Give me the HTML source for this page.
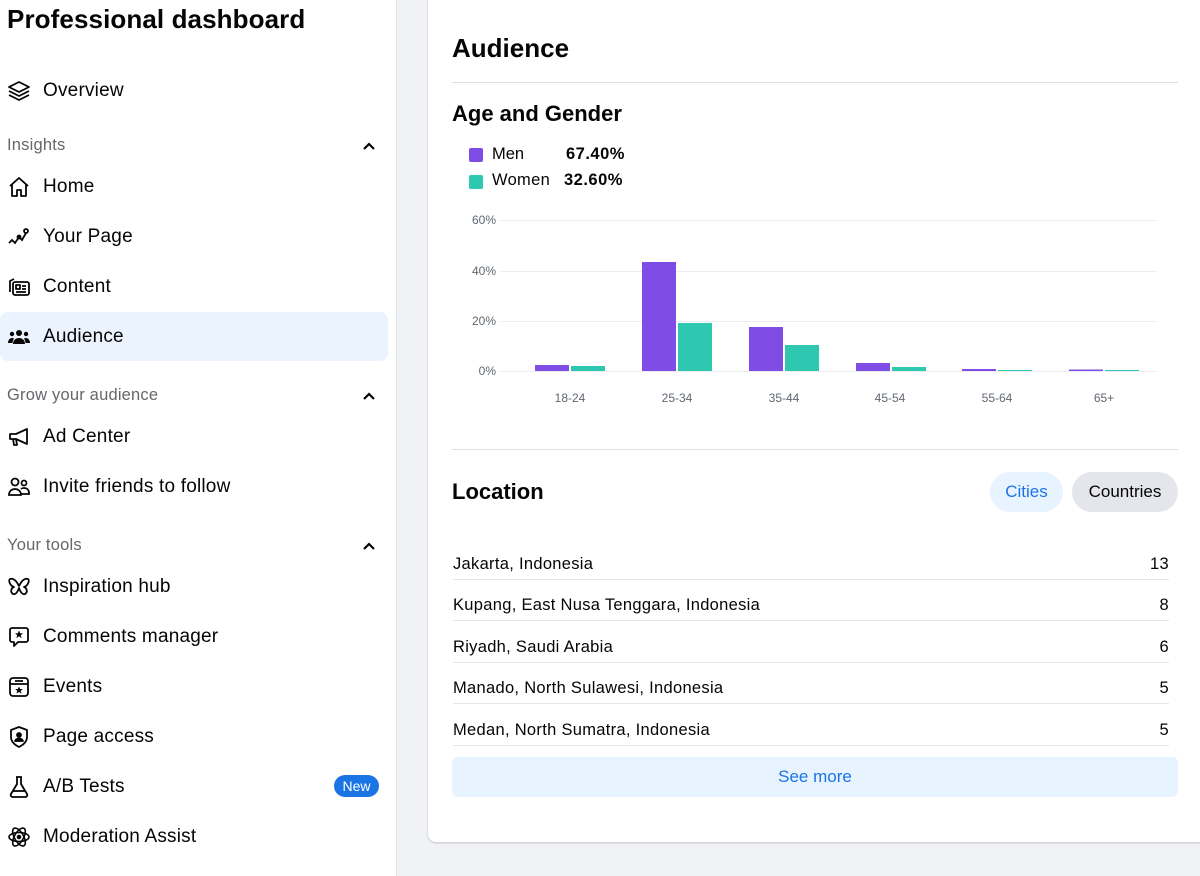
<!DOCTYPE html>
<html><head><meta charset="utf-8"><style>
*{margin:0;padding:0;box-sizing:border-box}
body{width:1200px;height:876px;overflow:hidden;background:#f0f2f5;font-family:"Liberation Sans",Arial,sans-serif;color:#050505;position:relative}
.side{position:absolute;left:0;top:0;width:397px;height:876px;background:#fff;border-right:1px solid #e4e6eb}
.a{position:absolute;white-space:nowrap}
.nav{font-size:19px;left:43px;letter-spacing:.2px}
.hdr{font-size:16.5px;color:#65676b;left:7px;letter-spacing:.2px}
.ic{position:absolute;left:7px;width:24px;height:24px}
.chev{position:absolute;left:362px;width:14px;height:10px}
.card{position:absolute;left:428px;top:-10px;width:780px;height:852px;background:#fff;border-radius:8px;box-shadow:0 1px 2px rgba(0,0,0,.2)}
.row{position:absolute;left:453px;width:716px;height:41px;border-bottom:1px solid #e4e6eb;font-size:16.5px;letter-spacing:.3px}
.row span{position:absolute;bottom:5px}
.row b{position:absolute;right:0;bottom:5px;font-weight:normal}
</style></head><body>
<div class="side">
<div class="a" style="left:7px;top:4px;font-size:26px;font-weight:bold;letter-spacing:.1px">Professional dashboard</div>

<svg class="ic" style="top:79px" viewBox="0 0 24 24" fill="none" stroke="#050505" stroke-width="1.8" stroke-linejoin="round"><path d="M12 3l10 5-10 5-10-5z"/><path d="M2 12l10 5 10-5"/><path d="M2 16l10 5 10-5"/></svg>
<div class="a nav" style="top:80px">Overview</div>

<div class="a hdr" style="top:136px">Insights</div>
<svg class="chev" style="top:141px" viewBox="0 0 14 10" fill="none" stroke="#050505" stroke-width="2.2"><path d="M2 8l5-5 5 5"/></svg>

<svg class="ic" style="top:175px" viewBox="0 0 24 24" fill="none" stroke="#050505" stroke-width="1.8" stroke-linejoin="round"><path d="M3 11L12 3l9 8M5 9v12h5v-6h4v6h5V9"/></svg>
<div class="a nav" style="top:176px">Home</div>

<svg class="ic" style="top:225px" viewBox="0 0 24 24" fill="none" stroke="#050505" stroke-width="1.8"><path d="M2 18l3-3 3 3 4-6 3 3 4-7"/><circle cx="19" cy="6" r="2"/><circle cx="12" cy="12" r="1.5"/></svg>
<div class="a nav" style="top:226px">Your Page</div>

<svg class="ic" style="top:275px" viewBox="0 0 24 24" fill="none" stroke="#050505" stroke-width="1.8" stroke-linejoin="round"><path d="M3 17V6l4-2"/><rect x="6" y="7" width="16" height="13" rx="2"/><rect x="9" y="10" width="4" height="4"/><path d="M15 11h4M15 14h4M9 17h10"/></svg>
<div class="a nav" style="top:276px">Content</div>

<div class="a" style="left:0;top:312px;width:388px;height:49px;background:#ebf3fe;border-radius:8px"></div>
<svg class="ic" style="top:325px" viewBox="0 0 24 24" fill="#050505"><circle cx="12" cy="8" r="3"/><circle cx="5" cy="9" r="2.2"/><circle cx="19" cy="9" r="2.2"/><path d="M6 19c0-4 3-6 6-6s6 2 6 6z"/><path d="M1 18c0-3 2-5 4-5 1 0 2 .5 2 .5C6 15 5.5 17 5.5 18z"/><path d="M23 18c0-3-2-5-4-5-1 0-2 .5-2 .5 1 1.5 1.5 3.5 1.5 4.5z"/></svg>
<div class="a nav" style="top:326px">Audience</div>

<div class="a hdr" style="top:386px">Grow your audience</div>
<svg class="chev" style="top:391px" viewBox="0 0 14 10" fill="none" stroke="#050505" stroke-width="2.2"><path d="M2 8l5-5 5 5"/></svg>

<svg class="ic" style="top:425px" viewBox="0 0 24 24" fill="none" stroke="#050505" stroke-width="1.8" stroke-linejoin="round"><path d="M3 9h6l11-5v15L9 14H3z"/><path d="M6 14l1 6h3l-1-6"/></svg>
<div class="a nav" style="top:426px">Ad Center</div>

<svg class="ic" style="top:475px" viewBox="0 0 24 24" fill="none" stroke="#050505" stroke-width="1.8"><circle cx="8" cy="7" r="3.5"/><circle cx="17" cy="8" r="2.5"/><path d="M2 20c0-4 3-6 6-6s6 2 6 6z"/><path d="M14 14c1-1 2-1 3-1 3 0 5 2 5 5v1h-8"/></svg>
<div class="a nav" style="top:476px">Invite friends to follow</div>

<div class="a hdr" style="top:536px">Your tools</div>
<svg class="chev" style="top:541px" viewBox="0 0 14 10" fill="none" stroke="#050505" stroke-width="2.2"><path d="M2 8l5-5 5 5"/></svg>

<svg class="ic" style="top:575px" viewBox="0 0 24 24" fill="none" stroke="#050505" stroke-width="1.8" stroke-linejoin="round"><path d="M12 11C9 5 6 3 3 4c-2 1 0 7 4 8-3 1-4 5-1 7 3 1 5-3 6-6 1 3 3 7 6 6 3-2 2-6-1-7 4-1 6-7 4-8-3-1-6 1-9 7z"/></svg>
<div class="a nav" style="top:576px">Inspiration hub</div>

<svg class="ic" style="top:625px" viewBox="0 0 24 24" fill="none" stroke="#050505" stroke-width="1.8" stroke-linejoin="round"><path d="M3 5a2 2 0 012-2h14a2 2 0 012 2v10a2 2 0 01-2 2H11l-4 4v-4H5a2 2 0 01-2-2z"/><path d="M12 6l1 2.5h2.5l-2 1.6.8 2.6L12 11l-2.3 1.7.8-2.6-2-1.6H11z" fill="#050505" stroke-width=".5"/></svg>
<div class="a nav" style="top:626px">Comments manager</div>

<svg class="ic" style="top:675px" viewBox="0 0 24 24" fill="none" stroke="#050505" stroke-width="1.8"><rect x="3" y="3" width="18" height="18" rx="3"/><path d="M3 9h18M8 6h8"/><path d="M12 12l1 2.3h2.4l-2 1.5.8 2.4-2.2-1.5-2.2 1.5.8-2.4-2-1.5H11z" fill="#050505" stroke-width=".5"/></svg>
<div class="a nav" style="top:676px">Events</div>

<svg class="ic" style="top:725px" viewBox="0 0 24 24" fill="none" stroke="#050505" stroke-width="1.8" stroke-linejoin="round"><path d="M12 2l8 3v7c0 5-4 8-8 10-4-2-8-5-8-10V5z"/><circle cx="12" cy="10" r="2" fill="#050505"/><path d="M8 16c1-2 3-2.5 4-2.5s3 .5 4 2.5z" fill="#050505"/></svg>
<div class="a nav" style="top:726px">Page access</div>

<svg class="ic" style="top:775px" viewBox="0 0 24 24" fill="none" stroke="#050505" stroke-width="1.8" stroke-linejoin="round"><path d="M9 2h6M10 2v7l-6 10a2 2 0 002 3h12a2 2 0 002-3L14 9V2"/><path d="M6 16h12"/></svg>
<div class="a nav" style="top:776px">A/B Tests</div>
<div class="a" style="left:334px;top:775px;width:45px;height:22px;border-radius:11px;background:#1b74e4;color:#fff;font-size:14px;text-align:center;line-height:22px">New</div>

<svg class="ic" style="top:825px" viewBox="0 0 24 24" fill="none" stroke="#050505" stroke-width="1.6"><ellipse cx="12" cy="12" rx="10" ry="4.5"/><ellipse cx="12" cy="12" rx="10" ry="4.5" transform="rotate(60 12 12)"/><ellipse cx="12" cy="12" rx="10" ry="4.5" transform="rotate(120 12 12)"/><circle cx="12" cy="12" r="1.5" fill="#050505"/></svg>
<div class="a nav" style="top:826px">Moderation Assist</div>
</div>

<div class="card"></div>
<div class="a" style="left:452px;top:33px;font-size:26px;font-weight:bold">Audience</div>
<div class="a" style="left:452px;top:82px;width:726px;height:1px;background:#dadde1"></div>
<div class="a" style="left:452px;top:101px;font-size:22px;font-weight:bold">Age and Gender</div>
<div class="a" style="left:469px;top:148px;width:14px;height:14px;background:#7f4ce6;border-radius:2px"></div>
<div class="a" style="left:492px;top:145px;font-size:16.5px">Men</div>
<div class="a" style="left:566px;top:145px;font-size:16.5px;font-weight:bold;letter-spacing:.5px">67.40%</div>
<div class="a" style="left:469px;top:175px;width:14px;height:14px;background:#2ec7b0;border-radius:2px"></div>
<div class="a" style="left:492px;top:171px;font-size:16.5px;letter-spacing:.3px">Women</div>
<div class="a" style="left:564px;top:171px;font-size:16.5px;font-weight:bold;letter-spacing:.5px">32.60%</div>

<svg class="a" style="left:440px;top:200px" width="740" height="220" viewBox="440 200 740 220" font-family="Liberation Sans,Arial,sans-serif" font-size="12" fill="#606770">
<g stroke="#ebedf0" stroke-width="1"><path d="M500 220.5H1157M500 271.5H1157M500 321.5H1157M500 371.5H1157"/></g>
<g text-anchor="end"><text x="496" y="224">60%</text><text x="496" y="275">40%</text><text x="496" y="325">20%</text><text x="496" y="375">0%</text></g>
<g fill="#7f4ce6"><rect x="535" y="365" width="34" height="6"/><rect x="642" y="262" width="34" height="109"/><rect x="749" y="327" width="34" height="44"/><rect x="856" y="363" width="34" height="8"/><rect x="962" y="369" width="34" height="2"/><rect x="1069" y="369.5" width="34" height="1.5"/></g>
<g fill="#2ec7b0"><rect x="571" y="366" width="34" height="5"/><rect x="678" y="323" width="34" height="48"/><rect x="785" y="345" width="34" height="26"/><rect x="892" y="367" width="34" height="4"/><rect x="998" y="370" width="34" height="1"/><rect x="1105" y="370" width="34" height="1"/></g>
<g text-anchor="middle"><text x="570" y="402">18-24</text><text x="677" y="402">25-34</text><text x="784" y="402">35-44</text><text x="890" y="402">45-54</text><text x="997" y="402">55-64</text><text x="1104" y="402">65+</text></g>
</svg>

<div class="a" style="left:452px;top:449px;width:726px;height:1px;background:#dadde1"></div>
<div class="a" style="left:452px;top:479px;font-size:22px;font-weight:bold">Location</div>
<div class="a" style="left:990px;top:472px;width:73px;height:40px;border-radius:20px;background:#e7f3ff;color:#1b74e4;font-size:17px;text-align:center;line-height:40px">Cities</div>
<div class="a" style="left:1072px;top:472px;width:106px;height:40px;border-radius:20px;background:#e4e6eb;font-size:17px;text-align:center;line-height:40px">Countries</div>

<div class="row" style="top:539px"><span>Jakarta, Indonesia</span><b>13</b></div>
<div class="row" style="top:580px"><span>Kupang, East Nusa Tenggara, Indonesia</span><b>8</b></div>
<div class="row" style="top:622px"><span>Riyadh, Saudi Arabia</span><b>6</b></div>
<div class="row" style="top:663px"><span>Manado, North Sulawesi, Indonesia</span><b>5</b></div>
<div class="row" style="top:705px"><span>Medan, North Sumatra, Indonesia</span><b>5</b></div>

<div class="a" style="left:452px;top:757px;width:726px;height:40px;border-radius:6px;background:#e7f3ff;color:#1b74e4;font-size:17px;text-align:center;line-height:40px">See more</div>
</body></html>
